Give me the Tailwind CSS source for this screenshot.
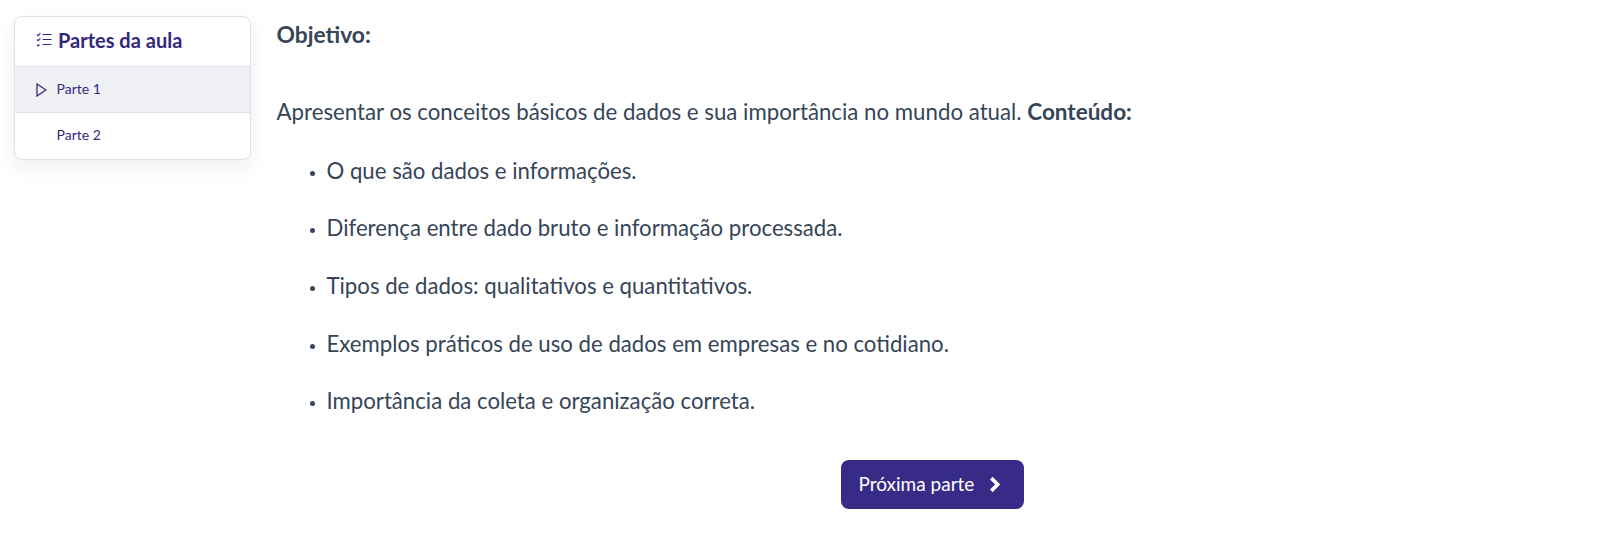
<!DOCTYPE html>
<html lang="pt-BR">
<head>
  <meta charset="UTF-8">
  <title>Partes da aula</title>
  <script src="https://cdn.jsdelivr.net/npm/@tailwindcss/browser@4"></script>
</head>
<body class="bg-white h-[535px] overflow-hidden font-['Lato',sans-serif] text-[#364558]">
  <div class="flex items-start gap-[25.500px] pl-[14px] pt-[16px]">
    <!-- menu lateral -->
    <aside class="w-[237px] shrink-0 bg-white border border-[#dfe1ee] rounded-[8px] shadow-[0_8px_20px_rgba(30,30,60,0.07)] overflow-hidden text-[#33287f]">
      <div class="h-[49px] flex items-center pl-[21px] pb-[3px] gap-[6px]">
        <svg class="w-[16px] h-[16px]" viewBox="0 0 16 16" fill="none" stroke="currentColor" stroke-width="1.100">
          <path d="M1 2.500l1.200 1.200L4.400 1.200M1 7.500l1.200 1.200 2.200-2.400M1 13l1 1 1.500-1.500M6.500 2.500H15.500M6.500 7.500H15.500M6.500 12.500H15.500"/>
        </svg>
        <span class="text-[20px] font-bold leading-none">Partes da aula</span>
      </div>
      <div class="h-[47px] flex items-center pl-[20.500px] pb-[2px] gap-[10px] bg-[#eef0f4] border-y border-[#dfe1ee] text-[14px]">
        <svg class="w-[11px] h-[14px] mt-[2px]" viewBox="0 0 11 14" fill="none" stroke="currentColor" stroke-width="1.300">
          <path d="M1 1v12l9-6z"/>
        </svg>
        <span>Parte 1</span>
      </div>
      <div class="h-[46px] flex items-center pl-[41.500px] pb-[4px] text-[14px]">Parte 2</div>
    </aside>
    <!-- conteudo -->
    <main class="text-[22.250px] leading-[32px] w-[1000px] mt-[2px]">
      <p class="font-bold text-[22.800px]">Objetivo:</p>
      <p class="mt-[46px]">Apresentar os conceitos básicos de dados e sua importância no mundo atual. <strong class="text-[22.500px]">Conteúdo:</strong></p>
      <ul class="mt-[26.500px] pl-[50px] list-disc marker:text-[15px] text-[22.200px] flex flex-col gap-[25.700px]">
        <li>O que são dados e informações.</li>
        <li>Diferença entre dado bruto e informação processada.</li>
        <li>Tipos de dados: qualitativos e quantitativos.</li>
        <li>Exemplos práticos de uso de dados em empresas e no cotidiano.</li>
        <li>Importância da coleta e organização correta.</li>
      </ul>
      <div class="mt-[42.500px] ml-[564px]">
        <button class="w-[183.500px] h-[49px] bg-[#372b87] text-white rounded-[8px] flex items-center pl-[18px] gap-[14px] text-[19px]">
          Próxima parte
          <svg class="w-[13px] h-[17px]" viewBox="0 0 12 16" fill="none" stroke="currentColor" stroke-width="3.400">
            <path d="M3 2l6 6-6 6"/>
          </svg>
        </button>
      </div>
    </main>
  </div>
</body>
</html>
